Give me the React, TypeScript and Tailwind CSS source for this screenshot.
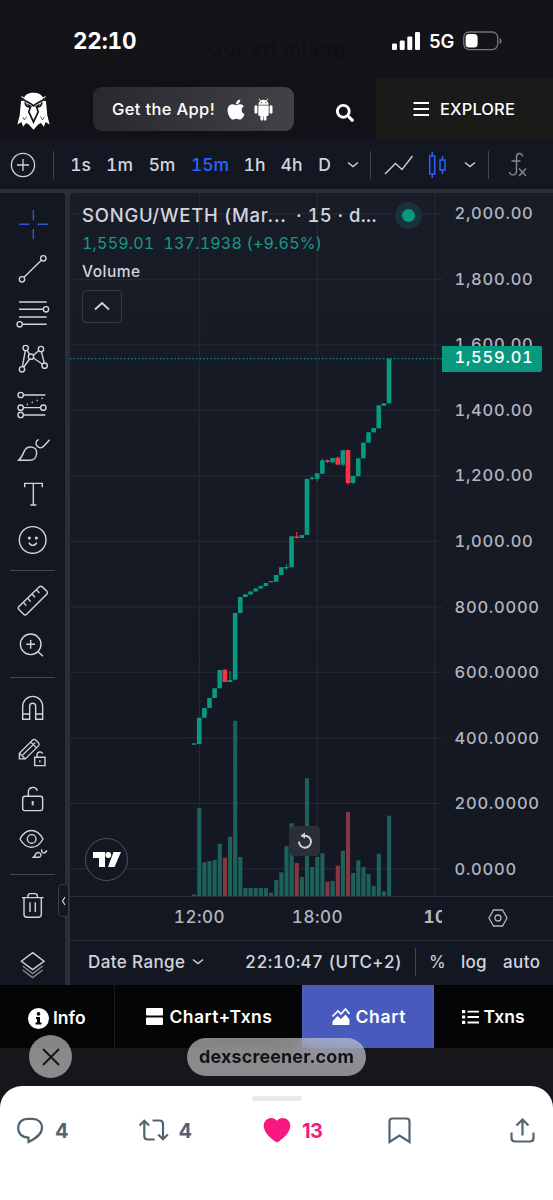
import React from "react";
import { FaApple, FaSearch } from "react-icons/fa";

const UP = "#089981";
const DOWN = "#f23645";

// [body top, body bottom, wick top, wick bottom, volume top, is down]
type Candle = [number, number, number, number, number, boolean?];

const CANDLES: Candle[] = [
  [743.3, 744.7, 743.3, 744.7, 894.5],
  [717.7, 744, 717.7, 744, 808],
  [708, 717.7, 708, 717.7, 862.3],
  [698, 708, 698, 708, 861],
  [688.3, 698, 688.3, 698, 860],
  [670, 688.3, 670, 688.3, 843.7],
  [669.7, 682, 669.3, 682, 857.7, true],
  [680, 682, 671, 682, 836.7],
  [613, 679.7, 613, 679.7, 720.7],
  [597, 613, 597, 613, 857],
  [594.3, 597, 594.3, 597, 888],
  [591.5, 594.5, 591.5, 594.5, 888],
  [588.5, 591.5, 588.5, 591.5, 888],
  [586, 588.5, 586, 588.5, 888],
  [583, 586, 583, 586, 888],
  [581, 582.2, 581, 582.2, 892.7],
  [575, 581.7, 575, 581.7, 880],
  [567.3, 575, 567.3, 575, 872.3],
  [567, 568.2, 564.3, 570, 846.3],
  [536.3, 567.3, 536.3, 567.3, 823.3],
  [536.5, 538, 532, 538.5, 863, true],
  [535, 538, 535, 538, 877],
  [479, 535, 478.5, 535, 778.3],
  [477.7, 479, 476.3, 480, 867],
  [473.3, 478.7, 473.3, 481, 857],
  [460.3, 473.7, 458.7, 473.7, 853.3],
  [460.3, 462, 459.5, 463, 881.7, true],
  [458, 462.3, 458, 463, 881],
  [457.7, 464.7, 456.3, 464.7, 865.7, true],
  [450.3, 464.7, 450.3, 466, 850.7],
  [450, 483, 449.3, 484.7, 812, true],
  [476, 483, 476, 484.3, 873],
  [458.3, 476.3, 458.3, 476.3, 860.3],
  [442.7, 458.3, 442.7, 458.3, 867],
  [432.3, 442.7, 432.3, 442.7, 874],
  [428, 432.3, 428, 432.3, 885.7],
  [405.3, 428.3, 405.3, 428.3, 853.7],
  [403.3, 405.7, 403.3, 405.7, 891.3],
  [358.7, 403.3, 358.7, 403.3, 815.7],
];

const PRICES = [
  "2,000.00",
  "1,800.00",
  "1,600.00",
  "1,400.00",
  "1,200.00",
  "1,000.00",
  "800.0000",
  "600.0000",
  "400.0000",
  "200.0000",
  "0.0000",
];

function StatusBar() {
  return (
    <div className="relative flex h-[78px] items-center bg-[#141318] pt-1 text-white">
      <span className="ml-[73px] w-[64px] text-[22.5px] leading-none font-bold tracking-[-0.2px] whitespace-nowrap tabular-nums">
        22:10
      </span>
      <span className="mt-4 ml-[71px] w-[138px] text-[20px] leading-none font-bold tracking-[0.5px] whitespace-nowrap text-[#101014]">
        Gör ett inlägg
      </span>
      <svg className="ml-[46px]" width="28" height="18" viewBox="0 0 28 18" fill="#fff">
        <rect x="0" y="11.5" width="5" height="6.5" rx="1.3" />
        <rect x="7.7" y="8.5" width="5" height="9.5" rx="1.3" />
        <rect x="15.3" y="4.5" width="5" height="13.5" rx="1.3" />
        <rect x="23" y="0" width="5" height="18" rx="1.3" />
      </svg>
      <span className="mt-px ml-[9px] w-[26px] text-[18.5px] leading-none font-semibold tracking-[-0.1px]">
        5G
      </span>
      <svg className="ml-[8px]" width="40" height="20" viewBox="0 0 40 20">
        <rect x="0.7" y="1" width="34" height="17.6" rx="5.5" fill="none" stroke="#77767b" strokeWidth="1.3" />
        <rect x="2.6" y="3" width="12" height="13.6" rx="3.6" fill="#fff" />
        <path d="M36.6 7v6c1.4-.5 2-1.6 2-3s-.6-2.500-2-3z" fill="#77767b" />
      </svg>
    </div>
  );
}

function Logo() {
  return (
    <svg width="35" height="39" viewBox="20 20 104 116" fill="#fff">
      <path d="M44 39C50 28 60 25 72 25s22 3 28 14l8-5c-1 7-3 12-6 16h7l4 42 7 28-12-8-5 14-9-11-8 5-14 15-14-15-8-5-9 11-5-14-12 8 7-28 4-42h7c-3-4-5-9-6-16z" />
      {/* Brow line, eye sockets and beak outline */}
      <path
        d="M38 41c7 11 24 13 34 23 10-10 27-12 34-23M47 54c1 10 7 14 16 13M97 54c-1 10-7 14-16 13M63 67l-5 15 14 30 14-30-5-15"
        fill="none"
        stroke="#121117"
        strokeWidth="5"
      />
      <path d="M53 57l16 9c-7 3-14 0-16-9zM91 57l-16 9c7 3 14 0 16-9z" fill="#121117" />
      <path d="M40 98l5 8 6-10M104 98l-5 8-6-10" fill="none" stroke="#121117" strokeWidth="2" />
    </svg>
  );
}

function AndroidIcon({ className }: { className?: string }) {
  return (
    <svg className={className} width="19" height="23" viewBox="0 0 19 23" fill="#fff">
      <path d="M5.200.6l1.500 2a5 5 0 0 1 5.600 0l1.500-2 .5.300-1.500 2.200Q14.600 4.500 14.700 6.700H4.300Q4.400 4.500 6.200 3.100L4.700.9zM4.300 7.500h10.400v9q0 1.500-1.500 1.500H12.500v3.300a1.400 1.400 0 0 1-2.800 0V18h-.5v3.300a1.400 1.400 0 0 1-2.800 0V18h-.6q-1.500 0-1.500-1.500z" />
      <rect x="0.500" y="7.300" width="2.900" height="8.500" rx="1.450" />
      <rect x="15.600" y="7.300" width="2.900" height="8.500" rx="1.450" />
      <circle cx="7.200" cy="4.700" r="0.600" fill="#3a393e" />
      <circle cx="11.800" cy="4.700" r="0.600" fill="#3a393e" />
    </svg>
  );
}

function Header() {
  return (
    <header className="flex h-[62px] items-center bg-[#121117] text-white">
      <div className="mt-[2px] ml-[16px]">
        <Logo />
      </div>
      <button
        type="button"
        className="ml-[42px] flex h-[44px] w-[201px] items-center rounded-[9px] bg-gradient-to-r from-[#29282e] to-[#424146] pl-[19px] text-left"
      >
        <span className="w-[104px] text-[16.5px] font-medium tracking-[0.35px] whitespace-nowrap">
          Get the App!
        </span>
        <FaApple className="ml-[10px] h-[23px] w-[20px]" />
        <AndroidIcon className="ml-[8px]" />
      </button>
      <FaSearch className="mt-2 ml-[42px] h-[18px] w-[18px]" />
      <div className="ml-auto flex h-full w-[177px] items-center bg-[#1a1a19] pl-[37px]">
        <svg width="17" height="16" viewBox="0 0 17 16" stroke="#fff" strokeWidth="2.2">
          <path d="M.5 2h15.500M.5 8h15.500M.5 14h15.500" />
        </svg>
        <span className="ml-[10px] text-[16.500px] font-medium tracking-[0.100px]">EXPLORE</span>
      </div>
    </header>
  );
}

function Chevron({ className }: { className?: string }) {
  return (
    <svg className={className} width="12" height="8" viewBox="0 0 12 8" fill="none" stroke="currentColor" strokeWidth="1.4">
      <path d="M1 1.500l5 4 5-4" />
    </svg>
  );
}

function Toolbar() {
  return (
    <div className="flex h-[49px] items-center bg-[#131722] pt-px text-[#d1d4dc]">
      <svg className="ml-[10px]" width="26" height="26" viewBox="0 0 26 26" fill="none" stroke="currentColor" strokeWidth="1.3">
        <circle cx="13" cy="13" r="11.600" />
        <path d="M13 7v12M7 13h12" />
      </svg>
      <div className="ml-[17px] h-[28px] w-px bg-[#434651]" />
      <div className="ml-[17px] flex gap-[17px] text-[17.500px] leading-none font-medium whitespace-nowrap">
        <span className="flex w-[19px] justify-center tabular-nums">1s</span>
        <span className="flex w-[25px] justify-center tabular-nums">1m</span>
        <span className="flex w-[26px] justify-center">5m</span>
        <span className="flex w-[36px] justify-center tabular-nums text-[#2962ff]">15m</span>
        <span className="flex w-[19px] justify-center tabular-nums">1h</span>
        <span className="flex w-[21px] justify-center">4h</span>
        <span className="flex w-[11px] justify-center">D</span>
      </div>
      <Chevron className="ml-[17px]" />
      <div className="ml-[11px] h-[28px] w-px bg-[#434651]" />
      <svg className="ml-[13px]" width="30" height="22" viewBox="0 0 30 22" fill="none" stroke="currentColor" strokeWidth="1.3">
        <path d="M1 20L11.500 9.500l6.500 6L28.500 2" />
      </svg>
      <svg className="ml-[14px]" width="20" height="28" viewBox="0 0 20 28" fill="none" stroke="#2962ff" strokeWidth="1.5">
        <path d="M1.700 5h5v18h-5zM4.200 1v4M4.200 23v4M12 9h5v10h-5zM14.500 5v4M14.500 19v4" />
      </svg>
      <Chevron className="ml-[16px]" />
      <div className="ml-[12px] h-[28px] w-px bg-[#434651]" />
      <svg className="ml-[19px]" width="20" height="26" viewBox="0 0 20 26" fill="none" stroke="#868993" strokeWidth="1.400">
        <path d="M14.500 4.500c0-4-6-4-6 .5v14c0 5-7 5-7 1M3.500 9h9M11 16.500l7 7.500M18 16.500l-7 7.500" />
      </svg>
    </div>
  );
}

function Tool({ children, color = "#d1d4dc" }: { children: React.ReactNode; color?: string }) {
  return (
    <svg
      className="block h-[45.3px] w-[65px] shrink-0"
      viewBox="0 0 195 136"
      fill="none"
      stroke={color}
      strokeWidth="4.2"
    >
      {children}
    </svg>
  );
}

function Sidebar() {
  return (
    <aside className="relative flex h-full w-[65px] flex-col rounded-tr-[4px] bg-[#131722] pt-[8.500px]">
      <Tool color="#2f55e0">
        <path d="M57 67h31M113 67h31M100 24v31M100 81v31" />
      </Tool>
      <Tool>
        <circle cx="130" cy="34" r="8" />
        <circle cx="66" cy="97" r="8" />
        <path d="M124 40L72 91" />
      </Tool>
      <Tool>
        <path d="M57 30h83M57 52h73M57 75h83M67 97h73" />
        <circle cx="138" cy="52" r="8" />
        <circle cx="59" cy="97" r="8" />
      </Tool>
      <Tool>
        <circle cx="77" cy="33" r="8" />
        <circle cx="123" cy="36" r="8" />
        <circle cx="93" cy="59" r="8" />
        <circle cx="66" cy="97" r="8" />
        <circle cx="134" cy="86" r="8" />
        <path d="M76 41l-9 48M81 40l8 12M89 66L71 90M100 55l16-14M100 63l27 18M124 44l9 34" />
      </Tool>
      <Tool>
        <circle cx="62" cy="36" r="8" />
        <circle cx="62" cy="74" r="8" />
        <circle cx="130" cy="74" r="8" />
        <circle cx="62" cy="96" r="8" />
        <path d="M70 36h66M70 74h52M70 96h66" />
        <path d="M80 65l50-20" strokeDasharray="4 12" />
      </Tool>
      <Tool>
        <path d="M56 97c9-8 12-16 17-28 9-18 37-15 37 6 0 14-9 22-21 22z" />
        <path d="M116 34c-10 5-10 14-4 21 6 6 14 5 19 0l18-20" />
      </Tool>
      <Tool>
        <path d="M74 43V31h53v12M100 31v65M91 96h18" />
      </Tool>
      <Tool>
        <circle cx="98" cy="63" r="40" />
        <circle cx="88" cy="57" r="2.500" fill="#d1d4dc" />
        <circle cx="109" cy="57" r="2.500" fill="#d1d4dc" />
        <path d="M87 71c5 11 18 11 23 0" />
      </Tool>
      <div className="mx-[10px] mt-[6px] mb-[6.300px] h-px shrink-0 bg-[#434651]" />
      <Tool>
        <path d="M118 29q4-3 8 0l15 14q3 4 0 8L80 112q-5 4-9 0L56 97q-3-4 0-8z" />
        <path d="M70 76l9 10M83 64l9 10M96 51l9 10M109 38l9 10" />
      </Tool>
      <Tool>
        <circle cx="92" cy="67" r="31" />
        <path d="M79 67h26M92 54v26M114 89l15 14" />
      </Tool>
      <div className="mx-[10px] mt-[9px] mb-[8px] h-px shrink-0 bg-[#434651]" />
      <Tool>
        <path d="M68 100V61a30 30 0 0 1 60 0v39h-21V61a9 9 0 0 0-18 0v39zM68 84h21M107 84h21" />
      </Tool>
      <Tool>
        <path d="M58 84V67l40-40q5-4 9 0l9 9q3 4 0 8L76 84zM58 67l18 17M68 72l38-37M92 33l17 17" strokeWidth="3.800" />
        <path d="M104 79h31v25h-31zM111 79v-8a9 9 0 0 1 17-3M119.500 88v6" />
      </Tool>
      <Tool>
        <rect x="68" y="61" width="60" height="43" rx="7" />
        <path d="M85 61V48c0-16 22-19 27-4" />
        <path d="M98 75v13" strokeWidth="6" />
      </Tool>
      <Tool>
        <path d="M60 51c18-34 51-34 69 0-18 33-51 33-69 0z" />
        <circle cx="95" cy="51" r="13" />
        <path d="M100 106c5-4 5-8 9-12 6-5 15-1 14 6-1 4-4 6-8 6zM126 82c-3 5 0 11 6 11 4 0 6-4 9-8" />
      </Tool>
      <div className="mx-[10px] mt-[7px] mb-[7px] h-px shrink-0 bg-[#434651]" />
      <Tool>
        <path d="M66 47h65M84 47v-5q0-7 7-7h14q7 0 7 7v5M72 47v50q0 9 9 9h34q9 0 9-9V47M90 61v29M106 61v29" />
      </Tool>
      <div className="mt-auto h-[43px] overflow-hidden">
        <Tool>
          <path d="M98 32l34 26-34 25-34-25z" />
          <path d="M68 72l30 23 30-23M68 84l30 23 30-23" stroke="#868993" />
        </Tool>
      </div>

      {/* Collapse handle */}
      <div className="absolute top-[691px] right-[-4px] flex h-[33px] w-[11px] items-center justify-center rounded-[4px] border border-[#363a45] bg-[#131722]">
        <svg width="5" height="10" viewBox="0 0 5 10" fill="none" stroke="#d1d4dc" strokeWidth="1.200">
          <path d="M4 1L1.500 5 4 9" />
        </svg>
      </div>
    </aside>
  );
}

// Candles and volume share one canvas; the viewBox is in page pixels.
function ChartCanvas() {
  return (
    <svg className="block" width="372" height="703" viewBox="70 193 372 703">
      <g stroke="#242833" strokeWidth="1.2">
        {PRICES.map((p, i) => (
          <path key={p} d={`M70 ${213.9 + i * 65.5}H442`} />
        ))}
        <path d="M199.500 193V896M317.200 193V896M435 193V896" />
      </g>
      {CANDLES.map(([top, bottom, wickTop, wickBottom, volume, down], i) => {
        const x = 194.1 + i * 5.13;
        return (
          <g key={i}>
            <rect x={x - 2} y={volume} width="4.1" height={896 - volume} fill={down ? "#873744" : "#1d6259"} />
            <rect x={x - 0.5} y={wickTop} width="1" height={wickBottom - wickTop} fill={down ? DOWN : UP} />
            <rect x={x - 2.3} y={top} width="4.6" height={bottom - top} fill={down ? DOWN : UP} />
          </g>
        );
      })}
      <path d="M70 358.700H442" stroke={UP} strokeWidth="1.200" strokeDasharray="1.300 2.300" />
    </svg>
  );
}

function Legend() {
  return (
    <div className="absolute top-0 left-[12px] text-[#d1d4dc]">
      <div className="flex h-[26px] items-center pt-[18px] text-[18.500px] leading-none font-medium whitespace-nowrap">
        <span className="w-[206px] tracking-[0.750px]">SONGU/WETH (Mar...</span>
        <span className="ml-[8px] w-[84px] tracking-[0.400px] tabular-nums">· 15 · d...</span>
        <span className="ml-[15px] flex h-[27px] w-[27px] items-center justify-center rounded-full bg-[#173238]">
          <span className="h-[13px] w-[13px] rounded-full bg-[#089981]" />
        </span>
      </div>
      <div className="mt-[16px] flex gap-[9px] text-[16px] leading-none tracking-[0.200px] whitespace-nowrap tabular-nums text-[#169a85]">
        <span>1,559.01</span>
        <span>137.1938 (+9.65%)</span>
      </div>
      <div className="mt-[13px] text-[15.500px] leading-none font-medium tracking-[0.500px]">Volume</div>
      <div className="mt-[10px] flex h-[33px] w-[40px] items-center justify-center rounded-[4px] border border-[#363a45]">
        <svg width="16" height="10" viewBox="0 0 16 10" fill="none" stroke="currentColor" strokeWidth="1.800">
          <path d="M1 8.500l7-6.500 7 6.500" />
        </svg>
      </div>
    </div>
  );
}

function ChartPane() {
  return (
    <section className="flex h-full min-w-0 flex-1 flex-col overflow-hidden rounded-tl-[4px] bg-gradient-to-b from-[#181c27] to-[#131722]">
      <div className="relative flex h-[703px]">
        <ChartCanvas />
        <div className="h-[703px] flex-1 overflow-hidden">
          <div className="-mt-[12.500px] flex flex-col">
            {PRICES.map((price) => (
              <div
                key={price}
                className="flex h-[65.600px] items-center pl-[12.500px] text-[16.500px] leading-none font-medium tracking-[0.750px] tabular-nums text-[#b2b5be]"
              >
                {price}
              </div>
            ))}
          </div>
        </div>

        <Legend />

        {/* Last price */}
        <div className="absolute top-[153px] left-[372px] flex h-[26px] w-[100px] items-center rounded-r-[2px] bg-[#089981] pb-[3px] pl-[12.500px] text-[16.500px] leading-none font-medium tracking-[0.750px] tabular-nums text-white">
          1,559.01
        </div>

        {/* TradingView badge */}
        <div className="absolute top-[645px] left-[15px] flex h-[43px] w-[43px] items-center justify-center rounded-full border-[1.500px] border-[#50535e] bg-[#131722]">
          <svg width="28" height="15" viewBox="0 0 28 15" fill="#fff">
            <path d="M0 0h12v15H6V6H0z" />
            <circle cx="15.300" cy="3" r="2.900" />
            <path d="M20.500 0H28l-6.500 15H15z" />
          </svg>
        </div>

        {/* Reset view */}
        <div className="absolute top-[633px] left-[220px] flex h-[30px] w-[30px] items-center justify-center rounded-[4px] bg-[#2a2e39]">
          <svg width="16" height="18" viewBox="0 0 16 18" fill="none" stroke="#d1d4dc" strokeWidth="1.900">
            <path d="M2 9.500a6 6 0 1 0 6-5.800H5" />
            <path d="M8 .5v6.300L3.500 3.700z" fill="#d1d4dc" stroke="none" />
          </svg>
        </div>
      </div>

      {/* Time axis */}
      <div className="flex h-[45px] items-center border-t border-b border-[#2a2e39] pb-[2px] text-[17px] leading-none font-medium tracking-[0.550px] tabular-nums text-[#b2b5be]">
        <span className="ml-[104.500px] flex w-[50px] justify-center">12:00</span>
        <span className="ml-[68px] flex w-[50px] justify-center">18:00</span>
        <span className="ml-[81px] w-[18px] overflow-hidden font-bold">10</span>
        <svg className="ml-[46.500px]" width="20" height="18" viewBox="0 0 20 18" fill="none" stroke="#b2b5be" strokeWidth="1.300">
          <path d="M5.500 1h9L19 9l-4.500 8h-9L1 9z" />
          <circle cx="10" cy="9" r="3" />
        </svg>
      </div>

      <div className="flex flex-1 items-center pb-[2px] text-[17px] leading-none font-medium whitespace-nowrap text-[#d1d4dc]">
        <span className="ml-[18px] w-[98px] tracking-[0.400px]">Date Range</span>
        <Chevron className="ml-[6px]" />
        <span className="ml-[41px] w-[157px] tracking-[0.400px] tabular-nums">22:10:47 (UTC+2)</span>
        <div className="ml-[13px] h-[28px] w-px bg-[#434651]" />
        <span className="ml-[13px] w-[18px] font-normal">%</span>
        <span className="ml-[14px] w-[27px] tracking-[0.200px]">log</span>
        <span className="ml-[15px] w-[38px] tracking-[0.400px]">auto</span>
      </div>
    </section>
  );
}

function TabBar() {
  return (
    <nav className="flex h-[63px] bg-[#050506] text-[17.500px] leading-none font-semibold whitespace-nowrap text-white">
      <div className="flex w-[115px] items-center border-r border-[#1c1c20] pt-[3px] pl-[28px]">
        <svg width="21" height="21" viewBox="0 0 21 21">
          <circle cx="10.500" cy="10.500" r="10.500" fill="#fff" />
          <path d="M8 9h4v5.500h1.500V16.500H7.500V14.500H9V11H8z" fill="#050506" />
          <circle cx="10.500" cy="5.900" r="1.800" fill="#050506" />
        </svg>
        <span className="ml-[4px]">Info</span>
      </div>
      <div className="flex w-[187px] items-center pl-[31px]">
        <svg width="17" height="17" viewBox="0 0 17 17" fill="#fff">
          <rect width="17" height="7.500" rx="1" />
          <rect y="9.500" width="17" height="7.500" rx="1" />
        </svg>
        <span className="ml-[6.500px] tracking-[0.450px]">Chart+Txns</span>
      </div>
      <div className="flex w-[132px] items-center border-r border-l border-[#5364c6] bg-[#485bbd] pl-[29px]">
        <svg width="18" height="17" viewBox="0 0 18 17" fill="#fff">
          <path d="M.5 17v-3.500L5.500 8l3.500 3 4.500-4.500 4 5V16q0 1-1 1z" />
          <path d="M.5 8.500L6 3l3 3 4.500-5 4 5" fill="none" stroke="#fff" strokeWidth="1.700" />
        </svg>
        <span className="ml-[5.500px] tracking-[0.700px]">Chart</span>
      </div>
      <div className="flex flex-1 items-center pl-[28px]">
        <svg width="17" height="14" viewBox="0 0 17 14" fill="#fff">
          <path d="M0 0h3.200v3.200H0zM0 5.400h3.200v3.200H0zM0 10.800h3.200V14H0zM5.500.7H17v1.900H5.500zM5.500 6.100H17V8H5.500zM5.500 11.500H17v1.900H5.500z" />
        </svg>
        <span className="ml-[4.500px]">Txns</span>
      </div>
    </nav>
  );
}

function PostActions() {
  return (
    <div className="flex h-[114px] flex-col rounded-t-[22px] bg-white text-[20px] leading-none font-bold text-[#536471]">
      <div className="mx-auto mt-[10px] h-[5px] w-[50px] rounded-full bg-[#e6eaed]" />
      <div className="mt-[15px] flex h-[28px] items-center">
        <svg className="ml-[16px]" width="28" height="28" viewBox="0 0 28 28" fill="none" stroke="currentColor" strokeWidth="2.200">
          <path d="M12.500 21.500C6 21.500 2.200 17.500 2.200 12.300 2.200 6.500 6 2.800 11.500 2.800h5C22 2.800 26 6.500 26 11.800c0 7-7 11-13.500 14.200z" />
        </svg>
        <span className="mt-px ml-[11px] w-[13px]">4</span>
        <svg className="ml-[70px]" width="31" height="24" viewBox="0 0 31 24" fill="none" stroke="currentColor" strokeWidth="2.200">
          <path d="M1.500 7.500L6.300 2.800l4.800 4.700M6.300 3v15q0 3.500 3.500 3.500h7M14.500 2.500h7q3.500 0 3.500 3.500v15M20.200 16.500l4.800 4.700 4.800-4.700" />
        </svg>
        <span className="mt-px ml-[9.500px] w-[13px]">4</span>
        <svg className="ml-[71.500px]" width="28" height="26" viewBox="0 0 28 26" fill="#f91880">
          <path d="M14 25.500C7 21.500.7 15 .7 8.500.7 1.500 9.500-2 14 3.800 18.500-2 27.300 1.500 27.300 8.500 27.300 15 21 21.500 14 25.500z" />
        </svg>
        <span className="mt-px ml-[11px] w-[24px] tracking-[-0.500px] text-[#f91880]">13</span>
        <svg className="ml-[62px]" width="23" height="27" viewBox="0 0 23 27" fill="none" stroke="currentColor" strokeWidth="2.200">
          <path d="M1.500 25V4.500q0-3 3-3h14q3 0 3 3V25l-10-6.500z" />
        </svg>
        <svg className="ml-[99px]" width="25" height="26" viewBox="0 0 25 26" fill="none" stroke="currentColor" strokeWidth="2.200">
          <path d="M1.500 15.500V21q0 3.500 3.500 3.500h15q3.500 0 3.500-3.500v-5.500M12.500 18.500V2.500M6.500 8.500l6-6 6 6" />
        </svg>
      </div>
    </div>
  );
}

export default function App() {
  return (
    <div className="relative flex h-[1200px] w-[553px] flex-col overflow-hidden bg-[#17161b] font-['Inter',sans-serif]">
      <StatusBar />
      <Header />
      <Toolbar />
      <main className="flex h-[796px] gap-[5px] bg-[#2a2e39] pt-[4px]">
        <Sidebar />
        <ChartPane />
      </main>
      <TabBar />
      <div className="h-[38px] shrink-0" />
      <PostActions />

      {/* Floating browser controls */}
      <button
        type="button"
        aria-label="Close"
        className="absolute top-[1035px] left-[29px] flex h-[43px] w-[43px] items-center justify-center rounded-full bg-white/50 backdrop-blur-md"
      >
        <svg width="20" height="20" viewBox="0 0 20 20" stroke="#17161b" strokeWidth="2">
          <path d="M2 2l16 16M18 2L2 18" />
        </svg>
      </button>
      <div className="absolute top-[1038px] left-[187px] flex h-[38px] w-[179px] items-center justify-center rounded-full bg-white/50 text-[18px] leading-none font-bold tracking-[0.100px] text-[#131318] backdrop-blur-md">
        dexscreener.com
      </div>
    </div>
  );
}
